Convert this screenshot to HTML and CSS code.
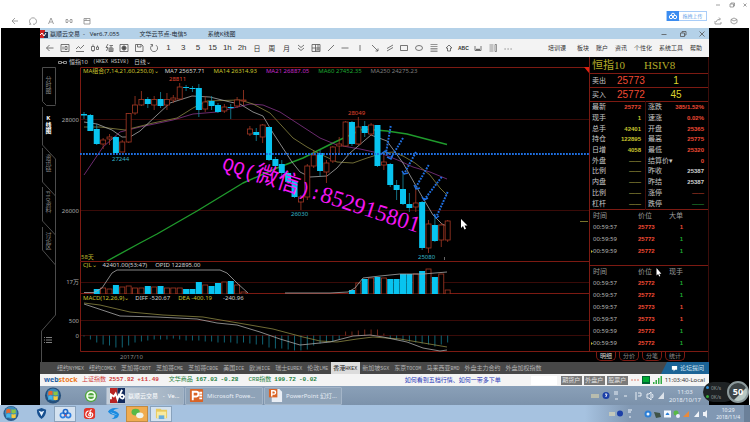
FILE: index.html
```html
<!DOCTYPE html>
<html lang="zh">
  <head>
    <meta charset="UTF-8" />
    <meta name="viewport" content="width=device-width, initial-scale=1.0" />
    <title>赢顺云交易</title>
    <link rel="stylesheet" href="styles.css" />
  </head>

  <body>
    <!-- Viewer window -->
    <header class="viewer">
      <div class="viewer-tools">
        <button aria-label="Back"><svg class="ico" viewBox="0 0 10 10"><path d="M8 5H2M5 2L2 5l3 3" /></svg></button>
        <button aria-label="Rotate"><svg class="ico" viewBox="0 0 10 10"><path d="M3 8.200a3.500 3.500 0 1 1 4 0M7 8.200h-2M3 8.200h-2" /></svg></button>
        <button aria-label="Text"><svg class="ico" viewBox="0 0 10 10"><path d="M2.500 8L5 2l2.500 6M3.500 6h3" /></svg></button>
        <button aria-label="Link"><svg class="ico" viewBox="0 0 10 10"><path d="M4 3.500H2v3h2M6 3.500h2v3H6M3 5h4" /></svg></button>
        <button aria-label="Save"><svg class="ico" viewBox="0 0 10 10"><path d="M2 2.500h6v5.500H2zM2 4.500h6M4 2.500v2" /></svg></button>
      </div>
      <button class="upload"><svg viewBox="0 0 12 9"><circle cx="4" cy="5.500" r="1.700" /><circle cx="8" cy="5.500" r="1.700" /><circle cx="6" cy="3.300" r="1.600" /></svg><span>拖拽上传</span></button>
      <div class="viewer-right">
        <div class="win">
          <button aria-label="Minimize"><svg class="ico" viewBox="0 0 10 10"><path d="M3 5h4" /></svg></button>
          <button aria-label="Restore"><svg class="ico" viewBox="0 0 10 10"><path d="M3 4h3.500v3H3zM4 4V3h3.500v3h-1" /></svg></button>
          <button aria-label="Close"><svg class="ico" viewBox="0 0 10 10"><path d="M3.500 3.500l3 3M6.500 3.500l-3 3" /></svg></button>
        </div>
        <div class="share">
          <button aria-label="Share"><svg class="ico" viewBox="0 0 10 10"><path d="M2 5v3h6V6M3 6q1-3 4-3M6 1.500L7.500 3 6 4.500" /></svg></button>
          <button aria-label="Box"><svg class="ico" viewBox="0 0 10 10"><path d="M5 2l3 1.500v3L5 8 2 6.500v-3zM2 3.500L5 5l3-1.500" /></svg></button>
        </div>
      </div>
    </header>

    <div class="stage">
      <main class="app">
        <div class="titlebar">
          <svg class="logo" viewBox="0 0 8 8"><path fill="#c22" d="M0 0h5v8H0z" /><path fill="#235" d="M4 2h4v6H4z" /><path stroke="#fff" fill="none" d="M0 5l2-2 2 3 2-3" /></svg>
          <span class="t1">赢顺云交易 &nbsp;- &nbsp; Ver6.7.055</span>
          <span class="t2">文华云节点-电信5</span>
          <span>系统K线图</span>
          <div class="app-win">
            <button aria-label="Minimize"><svg class="ico" viewBox="0 0 10 10"><path d="M2.500 5.500h5" /></svg></button>
            <button aria-label="Restore"><svg class="ico" viewBox="0 0 10 10"><path d="M2.500 4h4v3.500h-4zM4 4V2.500h4v3.500H6.500" /></svg></button>
            <button aria-label="Close"><svg class="ico" viewBox="0 0 10 10"><path d="M2.500 2.500l5 5M7.500 2.500l-5 5" /></svg></button>
          </div>
        </div>

        <div class="toolbar">
          <div class="tools">
            <button aria-label="Back"><svg class="ico" viewBox="0 0 10 10"><path d="M8.500 5h-7M4.500 2l-3 3 3 3" /></svg></button>
            <button aria-label="Quote"><svg class="ico" viewBox="0 0 10 10"><path d="M1 1.500h8v7H1zM3 3.500v3M5 3.500h2v3H5z" /></svg></button>
            <button aria-label="Line"><svg class="ico" viewBox="0 0 10 10"><path d="M1 6l2.500-2.500 2 2L9 2M1 8.500h8" /></svg></button>
            <button aria-label="Candles"><svg class="ico" viewBox="0 0 10 10"><path d="M1.500 3.500h3v4h-3zM3 1.500v2M3 7.500V9M6.500 4h2v2.500h-2zM7.500 2.500V4" /></svg></button>
            <button aria-label="Flash order"><svg class="ico" viewBox="0 0 10 10"><path d="M4 1L2 4.500h2L2.500 8M5.500 2.500h3.500M5 5h4v3.500H5zM7 3v5.500M5 7h4" /></svg></button>
            <button aria-label="Full view"><svg class="ico" viewBox="0 0 10 10"><path d="M1 1.500h8v7H1z" /><path fill="#444" d="M3.500 3.500h3v3h-3zM5 2v6M2 5h6" /></svg></button>
            <button aria-label="Save"><svg class="ico" viewBox="0 0 10 10"><path d="M1.500 1.500h6L9 3v5.500H1.500zM3.500 1.500v2.500h3.500V1.500" /></svg></button>
            <button aria-label="Refresh"><svg class="ico" viewBox="0 0 10 10"><path d="M3.500 2A3.500 3.500 0 1 0 7 2.200M1.500 1.500h2v2" /></svg></button>
            <button>1</button><button>3</button><button>5</button><button>15</button><button>1h</button><button>2h</button>
            <button class="cn">日</button><button class="cn">周</button><button class="cn">月</button>
            <button aria-label="More periods"><svg class="ico" viewBox="0 0 10 10"><path d="M2 2l3 2.500L8 2M2 5l3 2.500L8 5" /></svg></button>
            <button aria-label="Layout"><svg class="ico" viewBox="0 0 10 10"><path d="M1 1.500h8v7H1zM4.500 1.500v7M1 5h8M4.500 7H9M7 1.500V7" /></svg></button>
            <button aria-label="Trend"><svg class="ico" viewBox="0 0 10 10"><path d="M2 8l6-6" /></svg></button>
            <button aria-label="Horizontal"><svg class="ico" viewBox="0 0 10 10"><path d="M1.500 5h7" /></svg></button>
            <button aria-label="Vertical"><svg class="ico" viewBox="0 0 10 10"><path d="M5 2v6" /></svg></button>
            <button aria-label="Ray"><svg class="ico" viewBox="0 0 10 10"><path d="M2 2l6 6M8 5.500V8H5.500" /></svg></button>
            <button aria-label="Parallel"><svg class="ico" viewBox="0 0 10 10"><path d="M2 5.500L8 2M2 8l6-3.500" /></svg></button>
            <button aria-label="Rectangle"><svg class="ico" viewBox="0 0 10 10"><path d="M1.500 2.500h7v5h-7z" /></svg></button>
            <button aria-label="Ellipse"><svg class="ico" viewBox="0 0 10 10"><ellipse cx="5" cy="5" rx="3.500" ry="2.500" /></svg></button>
            <button aria-label="Golden section"><svg class="ico thin" viewBox="0 0 10 10"><path d="M1.500 1.500h7M1.500 3.500h7M1.500 5.500h7M1.500 7h7M1.500 8.500h7" /></svg></button>
            <button aria-label="Up arrow"><svg class="ico" viewBox="0 0 10 10"><path d="M5 2l3 3H6.500v3h-3V5H2z" /></svg></button>
            <button class="abc">ABC</button>
            <button aria-label="Measure"><svg class="ico" viewBox="0 0 10 10"><path d="M2 3v4.500h6V3M4 5.500v2M6 5.500v2M3 6.500h4" /></svg></button>
            <button aria-label="List"><svg class="ico thin" viewBox="0 0 10 10"><path d="M1.500 2h4M1.500 4h4M1.500 6h4M1.500 8h4M7 1.500h1.500v7H7z" /></svg></button>
            <button aria-label="More"><svg class="ico" viewBox="0 0 10 10"><path d="M1.500 6h1.200M4.500 6h1.200M7.500 6h1.200" /></svg></button>
          </div>
          <nav class="menu">
            <a href="#" class="course">培训课</a>
            <a href="#">板块</a>
            <a href="#">账户</a>
            <a href="#">资讯</a>
            <a href="#">个性化</a>
            <a href="#">系统工具</a>
            <a href="#">帮助</a>
          </nav>
        </div>

        <div class="work">
          <nav class="side">
            <svg class="side-lines" viewBox="0 0 16 305"><path d="M2.500 10.500h13v37M2.500 10.500v34l4 4h9M2.500 50v38l13 14v156l-14 16v31M2.500 91v34l13 14M2.500 130v34l13 14M2.500 170v23l13 15" /></svg>
            <button>分时图</button>
            <button class="on">K线图</button>
            <button>资讯链</button>
            <button class="mixed">F10资料</button>
            <button>讨论区</button>
            <button class="list" aria-label="List"><svg class="ico" viewBox="0 0 10 10"><path d="M1 2.500h1M3 2.500h6M1 5h1M3 5h6M1 7.500h1M3 7.500h6" /></svg></button>
          </nav>

          <section class="charts">
            <div class="symbol"><svg viewBox="0 0 9 5"><path d="M.5 1.500h3v2h-3zM5.500 1.500h3v2h-3zM3 2.500h3" /></svg><span>恒指10</span><span class="code">(HKEX HSIV8)</span><span>日线⌄</span></div>

            <div class="panel">
              <svg class="plot" viewBox="56 67 533 194">
                <path class="grid" d="M80 119.500H589M80 210.500H589" />
                <path class="frame" d="M80.500 261V67.500H589" />
                <path fill="#e02010" d="M584 67h5v6z" />
                <path stroke="#77732b" d="M580 221.500h8" />
                <text class="axis" x="79" y="122">28000</text>
                <text class="axis" x="79" y="213">26000</text>
                <path class="ma60" d="M107 261L140 243L157 234L197 211L220 197L243 183L277 168L303 158L333 143L363 129L387 131L407 134L426 139L447 144.500" />
                <path class="ma21" d="M84 175L103 147L120 132L140 127L173 120L193 114L217 112L250 104L263 105L280 112L300 125L320 138L337 145L360 149L383 154L400 161L413 167L430 172L447 179" />
                <path class="ma14" d="M84 127L100 127L125 130L153 123L177 118L193 108L207 101L222 100.500L240 100L253 104L270 113L293 138L307 147L320 154L337 162L353 163L367 158L383 153L393 152L403 156L415 163L430 175L440 188L447 195" />
                <path class="ma7" d="M84 122L97 124L112 130L122 137L130 137L140 131L157 115L170 103L192 96L210 97L230 102L240 104L253 112L263 116L273 133L292 162L300 172L310 177L327 176L337 168L350 153L371 135L387 141L403 163L420 193L433 215L442 224L447 226" />
                <g id="candles"></g>
                <path class="dots" d="M80 154H589" />
                <path class="dots" d="M390.700 126L386 153M403 138L391 158M416 152L404 174M428.700 165L416 187M441.700 177L424 200M447.700 192L436.700 216" />
                <path class="tips" d="M381 154l4-3 4 3M387 157l4 2 2-5M402 171l2 3 4-1M414 185l2 4 4-1M422 197l2 3 4-2M434 214l2 4 3-2" />
                <text class="hi" x="169" y="81">28811</text>
                <text class="hi" x="348" y="115">28049</text>
                <text class="lo" x="112" y="161">27244</text>
                <text class="lo" x="291" y="216">26030</text>
                <text class="lo" x="418" y="259">25080</text>
                <path stroke="#666" d="M444.500 257v3" />
                <text class="days" x="81" y="259">58天</text>
                <text class="mark" transform="translate(221 169) rotate(18)"><tspan class="half">QQ(</tspan>微信<tspan class="half">):</tspan>852915801</text>
                <path fill="#fff" d="M461 219v9l2-2 1.500 3.500 1.500-.7-1.500-3.300h3z" />
              </svg>
              <div class="legend">
                <button class="y">MA组合(7,14,21,60,250,0)⌄</button>
                <span class="w m7">MA7 25657.71</span>
                <span class="y m14">MA14 26314.93</span>
                <span class="m m21">MA21 26887.05</span>
                <span class="g m60">MA60 27452.35</span>
                <span class="d">MA250 24275.23</span>
              </div>
            </div>

            <div class="panel">
              <svg class="plot" viewBox="56 261 533 33">
                <path class="grid" d="M80 282.500H589" />
                <path class="frame" d="M80.500 294V261.500H589M80 293.500H589" />
                <text class="axis" x="79" y="284">17万</text>
                <g id="volume"></g>
                <path class="ma7" d="M84 292.500H94L102 288L112 273L117 270H220L227 273L237 283L248 293" />
                <path class="ma7" d="M285 293H330L348 292L355 288L363 278L380 276L400 274L423 274L447 272" />
              </svg>
              <div class="legend">
                <button class="y">CJL⌄</button>
                <span class="w">42401.00(53:47)</span>
                <span class="w opid">OPID 122895.00</span>
              </div>
            </div>

            <div class="panel">
              <svg class="plot" viewBox="56 294 533 68">
                <path class="grid" d="M80 320.500H589M80 335.500H589" />
                <path class="frame" d="M80.500 294V351.500H589" />
                <text class="axis" x="79" y="323">500</text>
                <text class="axis" x="79" y="338">0</text>
                <text class="date" x="120" y="359">2017/10</text>
                <g id="macd"></g>
                <path class="ma14" d="M84 303L100 305L130 312L163 315L203 317L250 325L273 329L303 337L320 341L337 342L357 339L373 337L400 339L447 347" />
                <path class="ma7" d="M84 304L120 316L157 317L197 319L217 323L237 325L260 332L280 339L300 345L330 342L353 336L370 335L383 337L407 342L423 348L440 351L447 350" />
              </svg>
              <div class="legend">
                <button class="y">MACD(12,26,9)⌄</button>
                <span class="w">DIFF -520.67</span>
                <span class="y dea">DEA -400.19</span>
                <span class="w">-240.96</span>
              </div>
            </div>
          </section>

          <aside class="quote">
            <div class="name"><span>恒指10</span><span>HSIV8</span></div>
            <div class="deal"><span>卖出</span><b>25773</b><i>1</i></div>
            <div class="deal"><span>买入</span><b>25772</b><i>45</i></div>
            <table class="facts">
              <tr><th>最新</th><td class="r">25772</td><th>涨跌</th><td class="r">385/1.52%</td></tr>
              <tr><th>现手</th><td class="y">1</td><th>速涨</th><td class="r">0.02%</td></tr>
              <tr><th>总手</th><td class="y">42401</td><th>开盘</th><td class="r">25365</td></tr>
              <tr><th>持仓</th><td class="y">122895</td><th>最高</th><td class="r">25775</td></tr>
              <tr><th>日增</th><td class="y">4058</td><th>最低</th><td class="r">25320</td></tr>
              <tr><th>外盘</th><td class="dim">——</td><th>结算价▾</th><td class="r">0</td></tr>
              <tr><th>比例</th><td class="dim">——</td><th>昨收</th><td class="w">25387</td></tr>
              <tr><th>内盘</th><td class="dim">——</td><th>昨结</th><td class="w">25387</td></tr>
              <tr><th>比例</th><td class="dim">——</td><th>涨停</th><td class="dr">——</td></tr>
              <tr><th>杠杆</th><td class="dim">——</td><th>跌停</th><td class="dg">——</td></tr>
            </table>
            <div class="ticks first">
              <table>
                <tr><th>时间</th><th>价位</th><th>大单</th></tr>
                <tr><td>00:59:57</td><td>25773</td><td class="r">1</td></tr>
                <tr><td>00:59:59</td><td>25772</td><td class="g">1</td></tr>
                <tr><td class="now">00:59:59</td><td>25772</td><td class="g">1</td></tr>
              </table>
            </div>
            <div class="ticks">
              <table>
                <tr><th>时间</th><th>价位</th><th>现手</th></tr>
                <tr><td>00:59:57</td><td>25772</td><td class="g">1</td></tr>
                <tr><td>00:59:57</td><td>25772</td><td class="g">1</td></tr>
                <tr><td>00:59:57</td><td>25773</td><td class="r">1</td></tr>
                <tr><td>00:59:57</td><td>25773</td><td class="r">1</td></tr>
                <tr><td>00:59:59</td><td>25772</td><td class="g">1</td></tr>
                <tr><td class="now">00:59:59</td><td>25772</td><td class="g">1</td></tr>
              </table>
              <svg class="pointer" viewBox="0 0 6 9"><path d="M.5 0v7.500l1.600-1.400L3.300 8.500l1-.5-1.100-2.300h2.200z" /></svg>
            </div>
            <div class="quote-tabs">
              <button class="on">明细</button><button>分价</button><button>分笔</button><button>统计</button>
            </div>
          </aside>
        </div>

        <nav class="markets">
          <a href="#">纽约<span class="code">NYMEX</span></a>
          <a href="#">纽约<span class="code">COMEX</span></a>
          <a href="#">芝加哥<span class="code">CBOT</span></a>
          <a href="#">芝加哥<span class="code">CME</span></a>
          <a href="#">芝加哥<span class="code">CBOE</span></a>
          <a href="#">美国<span class="code">ICE</span></a>
          <a href="#">欧洲<span class="code">ICE</span></a>
          <a href="#">瑞士<span class="code">EUREX</span></a>
          <a href="#">伦敦<span class="code">LME</span></a>
          <a href="#" class="on">香港<span class="code">HKEX</span></a>
          <a href="#">新加坡<span class="code">SGX</span></a>
          <a href="#">东京<span class="code">TOCOM</span></a>
          <a href="#">马来西亚<span class="code">BMD</span></a>
          <a href="#">外盘主力合约</a>
          <a href="#">外盘加权指数</a>
          <button class="forum"><svg viewBox="0 0 8 8"><path d="M1 1h6v4.500H4.500L3 7.500v-2H1z" /></svg>论坛提问</button>
        </nav>

        <div class="status">
          <span class="brand">web<em>stock</em></span>
          <span class="idx up"><span>上证指数</span><b>2557.82</b><b>+11.49</b></span>
          <span class="idx down"><span>文华商品</span><b>167.03</b><b>-0.28</b></span>
          <span class="idx down"><span>CRB指数</span><b>199.72</b><b>-0.02</b></span>
          <a href="#" class="tip">如何看到五档行情、如何一带多下单</a>
          <div class="status-right">
            <input type="text" aria-label="Code" />
            <button>期货户</button>
            <button>外盘户</button>
            <button>股票户</button>
            <svg class="signals" viewBox="0 0 32 10"><path stroke="#e08070" stroke-dasharray="2 1" d="M1 5h8" /><path fill="#063" d="M12 1h8v8h-8z" /><path fill="#0a3" d="M13 2h6v5h-6z" /><path fill="#3a4" d="M23 7h1.500v2H23zM25.500 5H27v4h-1.500zM28 3h1.500v6H28zM30.500 1H32v8h-1.500z" /></svg>
            <span class="local">11:03:40-Local</span>
          </div>
        </div>

        <div class="taskbar inner">
          <button class="orb" aria-label="Start"><svg viewBox="0 0 18 18"><circle cx="9" cy="9" r="8.500" fill="#234f7c" /><circle cx="9" cy="8" r="6.500" fill="#3b87b8" /><path fill="#e8662c" d="M4 5q2-1.500 4.500-.5v4Q6 7.500 4 9z" /><path fill="#8cc540" d="M9.500 4.500q2 1 4.500 0v4q-2.500 1-4.500 0z" /><path fill="#46b5ea" d="M4 10q2-1.500 4.500-.5v4Q6 12.500 4 14z" /><path fill="#f7cb3b" d="M9.500 9.500q2 1 4.500 0v4q-2.500 1-4.500 0z" /></svg></button>
          <button class="browser" aria-label="Browser"><svg viewBox="0 0 16 16"><circle cx="8" cy="8" r="7" fill="#4fa63c" /><circle cx="8" cy="8" r="4.500" fill="none" stroke="#f3fff0" stroke-width="2" /><path stroke="#f3fff0" stroke-width="1.500" d="M4 8h8" /></svg></button>
          <button class="task lit"><svg viewBox="0 0 16 16"><path fill="#b82222" d="M0 0h8v16H0z" /><path fill="#132a5c" d="M8 0h8v16H8z" /><path fill="none" stroke="#fff" stroke-width="2" d="M1 12V7l3 2 2-3 2 6 2-6M13 2q-3 4-2 8 3 3 4-1-1-3-4-1" /></svg><span>赢顺云交易 &nbsp; - &nbsp;Ve...</span></button>
          <button class="task"><svg viewBox="0 0 16 16"><rect x="1" y="1" width="14" height="14" rx="1" fill="#d96427" /><path fill="none" stroke="#fff" stroke-width="2" d="M4 13V4h4q2 0 2 2.500T8 9H5M11 5h3M11 8h3M11 11h3" /></svg><span>Microsoft Powe...</span></button>
          <button class="task"><svg viewBox="0 0 16 16"><path fill="#e9eef5" d="M4 1h8l3 3v11H4z" /><rect x="1" y="1" width="9" height="9" fill="#d96427" /><path fill="none" stroke="#fff" stroke-width="1.500" d="M4 9V3h2q2 0 2 1.800T6 6.500H4" /></svg><span>PowerPoint 幻灯...</span></button>
          <div class="tray">
            <svg viewBox="0 0 76 12"><path fill="#b8bcae" d="M2 4h8v4H2z" /><circle cx="17" cy="5.500" r="3.500" fill="#1c3fa8" /><path stroke="#fff" fill="none" d="M16 4.500q1-1.500 2 0l-1 1.500v1" /><path stroke="#e8eef5" fill="none" d="M25 2h4M25 4h4M26 9h3M35 6h3M47 2v8M49 3h3v3h-3M58 4h2l2-2v8l-2-2h-2zM63.500 4q1 2 0 4" /><path fill="#dde3ea" d="M69 9l6-7v7z" /></svg>
            <span class="clock">11:03<br />2018/10/17</span>
          </div>
        </div>
      </main>

      <div class="gauge">
        <span class="pill"><i></i><b>0K/s</b><i class="gr"></i><b>0K/s</b></span>
        <span class="ball">50</span>
      </div>
    </div>

    <footer class="taskbar outer">
      <button class="orb" aria-label="Start"><svg viewBox="0 0 18 18"><circle cx="9" cy="9" r="8" fill="#2d5c8c" /><circle cx="9" cy="8" r="6.500" fill="#3e8cbc" /><path fill="#e8662c" d="M4 5q2-1.500 4.500-.5v4Q6 7.500 4 9z" /><path fill="#8cc540" d="M9.500 4.500q2 1 4.500 0v4q-2.500 1-4.500 0z" /><path fill="#46b5ea" d="M4 10q2-1.500 4.500-.5v4Q6 12.500 4 14z" /><path fill="#f7cb3b" d="M9.500 9.500q2 1 4.500 0v4q-2.500 1-4.500 0z" /></svg></button>
      <button class="app-btn" aria-label="Guard"><svg viewBox="0 0 14 14"><path fill="#174f8f" d="M2 3l5-2 5 2q0 7-5 10Q2 10 2 3z" /><path fill="#e6f2ff" d="M4 4l3 1 3-1-3 6z" /></svg></button>
      <button class="app-btn lit" aria-label="Netdisk"><svg viewBox="0 0 14 14"><g fill="none" stroke-width="1.800"><circle cx="4" cy="9" r="2.500" stroke="#2d7ee0" /><circle cx="10" cy="9" r="2.500" stroke="#2d7ee0" /><circle cx="7" cy="5" r="2.300" stroke="#1f66c8" /></g><circle cx="7" cy="9" r="1" fill="#e44" /></svg></button>
      <button class="app-btn" aria-label="Music"><svg viewBox="0 0 14 14"><rect x="1" y="1" width="12" height="12" rx="3" fill="#e0342a" /><path fill="none" stroke="#fff" stroke-width="1.200" d="M9.500 3q-2 0-2 1.500l.8 4Q8 10 6.500 9.500q-1-1.500.5-3 3-1 3.500 1.500 0 3-3.500 3.500Q3 11 3 8q0-3 3-4" /></svg></button>
      <button class="app-btn" aria-label="Sogou"><svg viewBox="0 0 14 14"><path fill="#1c8be0" d="M1 5q4-6 12-3-5 0-6 2 5 1 6 4-1 5-8 5 4-2 3-4-5-1-7-4z" /><path fill="#d9efff" d="M3 5q4 2 8 3-3 1-8-3z" /></svg></button>
      <button class="app-btn wechat" aria-label="WeChat"><svg viewBox="0 0 14 14"><ellipse cx="5" cy="5.500" rx="4.500" ry="3.700" fill="#58b947" /><ellipse cx="9.500" cy="9" rx="4" ry="3.200" fill="#f0f5ec" /></svg></button>
      <button class="app-btn lit" aria-label="Files"><svg viewBox="0 0 14 14"><path fill="#e8c95c" d="M1 2h5l1 1h6v9H1z" /><path fill="#f8eaa0" d="M2 5h10v7H2z" /><path fill="#67aede" d="M4 9h6v4H4z" /></svg></button>
      <div class="tray">
        <svg class="wide" viewBox="0 0 104 12"><path fill="#c3c8bb" d="M1 4h6v4H1z" /><circle cx="12" cy="5.500" r="3" fill="#1c3fa8" /><path stroke="#eef4fb" fill="none" d="M20 2h4M20 4h3M21 9h2" /><circle cx="40" cy="6" r="3.500" fill="#2c7fd6" /><circle cx="40" cy="6" r="1.500" fill="#eaf4ff" /><path fill="#3f5246" d="M46 4l6 1 1 4-5 1z" /><rect x="56" y="2.500" width="7" height="7" fill="#f3f8ff" /><path fill="#2c7fd6" d="M57.500 7q2-5 4 0z" /><circle cx="68" cy="5" r="2.500" fill="#58b947" /><circle cx="70" cy="8" r="2" fill="#eef" /><path fill="#e88a3c" d="M75 9l6-6v6z" /><path fill="#f0f3f8" d="M86 9l5-6v6zM95 4h2l2-2v8l-2-2h-2z" /></svg>
        <span class="clock">10:29<br />2018/11/4</span>
      </div>
      <button class="peek" aria-label="Show desktop"></button>
    </footer>

    <script src="script.js"></script>
  </body>
</html>
```
FILE: styles.css
```css
* {
  box-sizing: border-box;
  margin: 0;
  padding: 0;
}

body {
  background-color: #ffffff;
  color: #333333;
  font-family: "Noto Sans", "Noto Sans CJK SC", sans-serif;
  font-size: 6px;
  line-height: 8px;
}

button {
  border: none;
  background: none;
  color: inherit;
  font: inherit;
  white-space: nowrap;
}

a {
  color: inherit;
  text-decoration: none;
  white-space: nowrap;
}

span {
  white-space: nowrap;
}

svg {
  display: block;
}

.ico {
  width: 10px;
  height: 10px;
  fill: none;
  stroke: #555555;
  stroke-width: 0.8;
}

.ico.thin {
  stroke-width: 0.6;
}

.code {
  font-family: "Liberation Mono", monospace;
  font-size: 5px;
}

/* Viewer window */
.viewer {
  display: flex;
  height: 28px;
}

.viewer-tools {
  display: flex;
  align-items: flex-end;
  gap: 8px;
  padding: 0 0 2px 10px;
}

.viewer .ico {
  stroke: #8a8a8a;
}

.upload {
  display: flex;
  align-items: center;
  align-self: flex-start;
  margin: 11px 6px 0 auto;
  width: 41px;
  height: 10px;
  border: 1px solid #a9cdf8;
  color: #5f9fe8;
  font-size: 5px;
}

.upload svg {
  width: 12px;
  height: 10px;
  background-color: #3b8cf0;
  fill: none;
  stroke: #ffffff;
}

.upload span {
  flex: 1;
  text-align: center;
}

.viewer-right {
  width: 37px;
}

.win {
  display: flex;
  justify-content: space-between;
}

.share {
  display: flex;
  gap: 6px;
  margin-top: 6px;
}

/* Trading application */
.stage {
  position: relative;
  margin: 0 1px;
  padding: 0 40px 0 39px;
  background-color: #000000;
}

.titlebar {
  display: flex;
  align-items: center;
  height: 11px;
  padding-right: 2px;
  background-color: #b4d1e8;
  color: #1d2a36;
}

.logo {
  width: 8px;
  height: 8px;
  margin-right: 2px;
}

.t1 {
  margin-right: 20px;
}

.t2 {
  margin-right: 21px;
}

.app-win {
  display: flex;
  gap: 9px;
  margin-left: auto;
}

.toolbar {
  display: flex;
  align-items: center;
  height: 18px;
  padding: 0 7px 0 3px;
  background-color: #f3f3f3;
}

.tools {
  display: grid;
  grid-template-columns: repeat(32, 1fr);
  flex: 0 1 472px;
}

.tools button {
  display: flex;
  align-items: center;
  justify-content: center;
  font-family: "Liberation Sans", sans-serif;
  font-size: 8px;
  line-height: 10px;
}

.tools .cn {
  font-family: "Noto Sans CJK SC", sans-serif;
  font-size: 7px;
}

.tools .abc {
  font-size: 5px;
  font-weight: bold;
}

.menu {
  display: flex;
  gap: 7px;
  margin-left: auto;
}

.course {
  margin-right: 4px;
}

.work {
  display: flex;
  background-color: #000000;
  color: #c8c8c8;
}

/* Vertical page tabs */
.side {
  position: relative;
  width: 16px;
  display: flex;
  flex-direction: column;
  align-items: center;
  padding-top: 8px;
}

.side-lines {
  position: absolute;
  left: 0;
  top: 0;
  width: 16px;
  height: 305px;
  fill: none;
  stroke: #4c4c4c;
}

.side button {
  width: 10px;
  height: 39px;
  color: #858585;
  writing-mode: vertical-rl;
  text-orientation: upright;
  line-height: 10px;
}

.side .mixed {
  text-orientation: mixed;
}

.side .on {
  color: #ffffff;
  font-weight: bold;
}

.side .list {
  height: 10px;
  margin-top: 75px;
}

.side .list .ico {
  stroke: #a0a0a0;
}

/* Charts */
.charts {
  flex: 1;
  min-width: 0;
}

.symbol {
  display: flex;
  align-items: center;
  gap: 5px;
  height: 10px;
  padding-left: 2px;
}

.symbol svg {
  width: 9px;
  height: 5px;
  margin-right: -3px;
  fill: none;
  stroke: #a8a8a8;
  stroke-width: 0.8;
}

.panel {
  position: relative;
}

.plot {
  width: 100%;
  height: auto;
}

.plot text {
  font-size: 6px;
}

.grid {
  stroke: #3a0b08;
}

.frame {
  fill: none;
  stroke: #7c1a12;
}

.axis {
  fill: #a8a8a8;
  text-anchor: end;
}

.date {
  fill: #8a8a8a;
}

.hi {
  fill: #e0452f;
}

.lo {
  fill: #35b4c8;
}

.days {
  fill: #b8b02c;
}

.ma7,
.ma14,
.ma21,
.ma60 {
  fill: none;
  stroke: #a8a8a8;
  stroke-width: 0.8;
  stroke-linejoin: round;
}

.ma14 {
  stroke: #8b8742;
}

.ma21 {
  stroke: #86358a;
}

.ma60 {
  stroke: #1f9a2c;
  stroke-width: 1.4;
}

.dots {
  fill: none;
  stroke: #1f6fe0;
  stroke-width: 2;
  stroke-dasharray: 1.8 1.2;
}

.tips {
  fill: none;
  stroke: #1f6fe0;
  stroke-width: 1.4;
}

.plot .mark {
  fill: #f316f3;
  font-family: "Liberation Serif", "Noto Sans CJK SC", serif;
  font-size: 23px;
}

.mark .half {
  font-family: "Liberation Mono", monospace;
  font-size: 19px;
}

.up-body {
  fill: #000000;
  stroke: #a53824;
}

.up-line {
  stroke: #a53824;
}

.down-body {
  fill: #08c4f0;
}

.down-line {
  stroke: #178ea6;
}

.legend {
  position: absolute;
  left: 27px;
  top: 0;
  display: flex;
  gap: 6px;
  height: 9px;
  line-height: 9px;
}

.m7,
.m14,
.m21,
.m60 {
  margin-right: 3px;
}

.opid,
.dea {
  margin-left: 2px;
}

.dea {
  margin-right: 5px;
}

.y {
  color: #c9c42e;
}

.w {
  color: #d0d0d0;
}

.m {
  color: #c42ac8;
}

.g {
  color: #1fa832;
}

.d {
  color: #7c7c7c;
}

.r {
  color: #f04a34;
}

/* Quote panel */
.quote {
  display: flex;
  flex-direction: column;
  width: 120px;
  border-right: 1px solid #3c0d0a;
}

.name {
  display: flex;
  gap: 19px;
  height: 16px;
  padding-left: 2px;
  border-left: 1px solid #7c1a12;
  color: #b4ac28;
  font-family: "Liberation Serif", "Noto Sans CJK SC", serif;
  font-size: 11px;
  line-height: 17px;
}

.deal {
  display: grid;
  grid-template-columns: 25px 44px 30px;
  height: 14px;
  padding-left: 2px;
  border: 1px solid #7c1a12;
  border-width: 1px 0 0 1px;
  font-size: 7px;
  line-height: 14px;
}

.deal b {
  color: #f04a34;
  font-family: "Liberation Sans", sans-serif;
  font-size: 10px;
  font-weight: normal;
}

.deal i {
  color: #dcd62c;
  font-family: "Liberation Sans", sans-serif;
  font-size: 10px;
  font-style: normal;
  text-align: center;
}

table {
  width: 100%;
  border-collapse: collapse;
  table-layout: fixed;
}

.facts {
  height: 109px;
  border: 1px solid #7c1a12;
  border-right: none;
}

.facts th {
  width: 26px;
  padding-left: 2px;
  font-size: 7px;
  font-weight: normal;
  line-height: 8px;
  text-align: left;
  white-space: nowrap;
}

.facts td {
  padding-right: 4px;
  font-family: "Liberation Sans", sans-serif;
  font-weight: bold;
  text-align: right;
  white-space: nowrap;
}

.facts td:nth-child(2) {
  width: 30px;
  border-right: 1px solid #3c0d0a;
}

.facts .dim {
  color: #a09a40;
}

.facts .dr {
  color: #b03c28;
}

.facts .dg {
  color: #238a34;
}

.ticks {
  position: relative;
  flex: 1;
  padding: 0 25px 0 3px;
  border-left: 1px solid #7c1a12;
}

.ticks.first {
  flex: 0 0 56px;
  border-bottom: 1px solid #7c1a12;
}

.ticks th {
  height: 11px;
  color: #9a9a9a;
  font-size: 7px;
  font-weight: normal;
  text-align: left;
}

.ticks td {
  height: 12px;
  color: #b4b4b4;
}

.ticks td + td {
  font-family: "Liberation Sans", sans-serif;
  font-weight: bold;
}

.ticks td:nth-child(2) {
  color: #f04a34;
}

.ticks th:first-child {
  width: 45px;
}

.ticks th:nth-child(2) {
  width: 26px;
}

.ticks tr > :last-child {
  text-align: right;
}

.ticks td.r {
  color: #f04a34;
}

.ticks td.g {
  color: #1fa832;
}

/* Marks the latest trade */
.now::before {
  content: "";
  display: inline-block;
  width: 2px;
  height: 3px;
  margin-left: -2px;
  background-color: #b8b02c;
  clip-path: polygon(0 0, 100% 50%, 0 100%);
}

.pointer {
  position: absolute;
  left: 66px;
  top: 2px;
  width: 6px;
  height: 9px;
  fill: #ffffff;
}

.quote-tabs {
  display: flex;
  gap: 3px;
  height: 11px;
  padding-left: 7px;
  border-top: 1px solid #7c1a12;
}

.quote-tabs button {
  width: 20px;
  height: 9px;
  border: 1px solid #7c1a12;
  border-top: none;
  border-radius: 0 0 5px 5px;
  color: #8c8c8c;
}

.quote-tabs .on {
  color: #d8d8d8;
}

/* Market tabs */
.markets {
  display: flex;
  height: 12px;
  padding-left: 15px;
  background-color: #474747;
  color: #b4b4b4;
  line-height: 12px;
}

.markets a {
  padding: 0 3px 0 2px;
}

.markets .on {
  background-color: #dcdcdc;
  color: #222222;
}

.forum {
  display: flex;
  align-items: center;
  gap: 2px;
  margin-left: auto;
  padding: 0 5px 0 10px;
  background-color: #1b6396;
  color: #d4e8f5;
  clip-path: polygon(6px 0, 100% 0, 100% 100%, 0 100%);
}

.forum svg {
  width: 7px;
  height: 7px;
  fill: #ffffff;
}

/* Status line */
.status {
  display: flex;
  align-items: center;
  height: 12px;
  padding: 0 4px;
  background-color: #f4f4f4;
}

.brand {
  width: 38px;
  color: #2560a4;
  font-size: 7px;
  font-weight: bold;
}

.brand em {
  color: #ee7a22;
  font-style: normal;
}

.idx {
  display: flex;
  gap: 3px;
  margin-right: 10px;
  font-family: "Liberation Mono", "Noto Sans CJK SC", monospace;
}

.up {
  color: #d03a3a;
}

.down {
  color: #23803c;
}

.tip {
  margin: 0 auto;
  padding-left: 48px;
  color: #2a38b8;
}

.status-right {
  display: flex;
  align-items: center;
  gap: 2px;
}

.status-right input {
  width: 26px;
  height: 9px;
  margin-right: 2px;
  border: none;
  background-color: #ffffff;
  font-size: 6px;
}

.status-right button {
  width: 21px;
  height: 9px;
  background-color: #7a7a7a;
  color: #e0e0e0;
}

.signals {
  width: 32px;
  height: 10px;
}

.local {
  margin-left: 1px;
}

/* Taskbars */
.taskbar {
  display: flex;
  align-items: center;
}

.inner {
  height: 19px;
  padding-right: 8px;
  background: linear-gradient(#8aa0b8, #7c92ab);
  color: #e6edf5;
}

.orb svg {
  width: 18px;
  height: 17px;
}

.inner .orb {
  margin-left: 4px;
}

.browser {
  margin: 0 8px 0 22px;
}

.browser svg {
  width: 14px;
  height: 14px;
}

.task {
  display: flex;
  align-items: center;
  gap: 3px;
  width: 78px;
  height: 18px;
  padding-left: 3px;
  border: 1px solid #a4b5c8;
  border-radius: 1px;
  background-color: #8fa3b8;
  overflow: hidden;
}

.task + .task {
  margin-left: 1px;
}

.task.lit {
  background: linear-gradient(to right, #c4ced9, #9eafc0);
  color: #ffffff;
}

.task svg {
  flex: none;
  width: 15px;
  height: 15px;
}

.tray {
  display: flex;
  align-items: center;
  gap: 4px;
  margin-left: auto;
}

.tray svg {
  width: 76px;
  height: 12px;
}

.tray .wide {
  width: 104px;
}

.clock {
  text-align: center;
}

.outer {
  height: 17px;
  gap: 2px;
  padding-left: 2px;
  background: linear-gradient(to right, #a6c2e0 0, #a6c2e0 78%, #8198b3 84%, #8198b3 100%);
  color: #f0f5fb;
}

.outer .orb {
  margin-right: 8px;
}

.app-btn {
  display: flex;
  align-items: center;
  justify-content: center;
  width: 22px;
  height: 16px;
}

.app-btn svg {
  width: 13px;
  height: 13px;
}

.app-btn.lit {
  border: 1px solid #89a2bc;
  background-color: #d4e2f0;
}

.app-btn.wechat {
  border: 1px solid #c08a44;
  background-color: #f0ac50;
}

.outer .clock {
  font-size: 5px;
  line-height: 7px;
}

.peek {
  width: 6px;
  height: 17px;
  margin-left: 2px;
  background-color: #6b8099;
}

/* Floating speed gauge */
.gauge {
  position: absolute;
  right: 0;
  bottom: 2px;
  display: flex;
  align-items: center;
}

.pill {
  display: grid;
  grid-template-columns: 5px 1fr;
  align-items: center;
  width: 32px;
  height: 20px;
  margin-right: -8px;
  padding: 1px 3px;
  border-radius: 10px;
  background-color: #1e2224;
  color: #8c9498;
  font-size: 5px;
}

.pill b {
  font-weight: normal;
}

.pill i {
  width: 3px;
  height: 3px;
  border-radius: 50%;
  background-color: #2f8fd8;
}

.pill .gr {
  background-color: #38a838;
}

.ball {
  width: 22px;
  height: 22px;
  border: 2px solid #8c9a9c;
  border-radius: 50%;
  background: linear-gradient(135deg, #3c4446 60%, #b8c8c4 62%);
  color: #ffffff;
  font-size: 9px;
  font-weight: bold;
  line-height: 18px;
  text-align: center;
}
```
FILE: script.js
```js
// 58 daily bars: [direction, high, top, bottom, low], 1 = up, 0 = down
const bars = [
  [0, 112, 114, 115.5, 119], [0, 114, 115, 131, 131], [0, 124, 129, 144, 145], [1, 138, 140, 144, 149],
  [1, 134, 137, 139, 145], [0, 136, 137, 153, 153], [1, 140, 142, 152, 152], [1, 113, 113.5, 142, 143],
  [1, 96, 105, 113, 115], [1, 91, 99.5, 105, 106], [0, 97, 99, 104, 108], [1, 96, 99.5, 105, 110],
  [0, 92, 99, 106, 108], [1, 93, 99.5, 105, 110], [1, 95, 98, 100, 103], [1, 83, 87, 99, 100],
  [0, 85, 87, 88, 91], [0, 86, 88, 89, 92], [0, 84, 88, 110, 117], [1, 96, 102, 109, 112],
  [0, 96, 101, 106, 110], [0, 103, 105, 112, 113], [1, 104, 107, 111, 113], [0, 104, 107, 108, 119],
  [1, 97, 100, 106, 108], [1, 90, 100, 101, 105], [1, 126, 129, 134, 136], [0, 128, 132, 135, 141],
  [1, 124, 125, 137, 143], [0, 127, 127, 160, 161], [0, 157, 159, 166, 168], [0, 160, 164, 173, 176],
  [0, 172, 173, 182, 184], [0, 180, 181, 197, 198], [1, 195, 197, 202, 210], [1, 164, 166, 197, 200],
  [1, 151, 155, 166, 168], [0, 150, 153, 171, 176], [1, 160, 163, 172, 183], [1, 146, 147, 161, 163],
  [1, 137, 144, 146, 155], [1, 121, 122, 146, 147], [0, 121, 122, 144, 146], [1, 117, 127, 144, 145],
  [0, 121, 126, 133, 137], [1, 123, 125, 134, 136], [0, 125, 125, 166, 167], [1, 155, 162, 165, 170],
  [0, 163, 164, 185, 187], [0, 180, 185, 190, 200], [0, 173, 189, 204, 205], [0, 193, 204, 208, 212],
  [1, 188, 203, 207, 212], [0, 201, 202, 248, 250], [1, 220, 224, 248, 253], [0, 214, 225, 241, 242],
  [1, 223, 225, 240, 247], [1, 220, 221, 240, 242]
];

// Top edge of each volume column, empty where nothing was traded
const volume = [
  , , [0, 289], [1, 288], [1, 289], [0, 285], [1, 287], [1, 286], [1, 288], [1, 288], [0, 286], [1, 287],
  [0, 286], [1, 288], [1, 288], [1, 288], [0, 289], [0, 289], [0, 282], [1, 285], [0, 286], [0, 283],
  [1, 282], [0, 281], [1, 285], [1, 292], , , , , , , , , , , , , , , , ,
  [0, 290], [1, 283], [0, 279], [1, 278], [0, 277], [1, 278], [0, 279], [0, 279], [0, 274], [0, 274],
  [1, 274], [0, 271], [1, 269], [0, 277], [1, 274], [1, 290]
];

// MACD column lengths, drawn down from the zero line (negative = up)
const macd = [
  1, 4, 7, 9, 10, 12, 12, 10, 7, 6, 5, 4, 4, 4, 3, 4, 5, 5, 5, 6, 6, 7, 7, 7, 8, 7, 8, 9, 9, 12, 13, 13,
  14, 15, 15, 14, 10, 8, 7, 6, 4, -4, -4, -5, -6, -6, -6, -2, 3, 4, 5, 6, 7, 8, 9, 11, 9, 7
];

const x = (i) => 84 + i * 6.38;

const candleGroup = document.getElementById("candles");
const volumeGroup = document.getElementById("volume");
const macdGroup = document.getElementById("macd");

candleGroup.innerHTML = bars
  .map(([up, high, top, bottom, low], i) => {
    const kind = up ? "up" : "down";
    const w = up ? 5 : 6;
    return `<path class="${kind}-line" stroke-width=".8" d="M${x(i)} ${high}V${low}" />
      <rect class="${kind}-body" stroke-width=".8" x="${x(i) - w / 2}" y="${top}" width="${w}" height="${bottom - top}" />`;
  })
  .join("");

volume.forEach(([up, top] = [], i) => {
  if (!top) return;
  const kind = up ? "up" : "down";
  const w = up ? 5 : 6;
  volumeGroup.innerHTML += `<rect class="${kind}-body" stroke-width=".8" x="${x(i) - w / 2}" y="${top}" width="${w}" height="${294 - top}" />`;
});

macdGroup.innerHTML = macd
  .map((v, i) => `<path class="${v < 0 ? "up" : "down"}-line" stroke-width=".7" d="M${x(i)} 335.5v${v}" />`)
  .join("");
```
